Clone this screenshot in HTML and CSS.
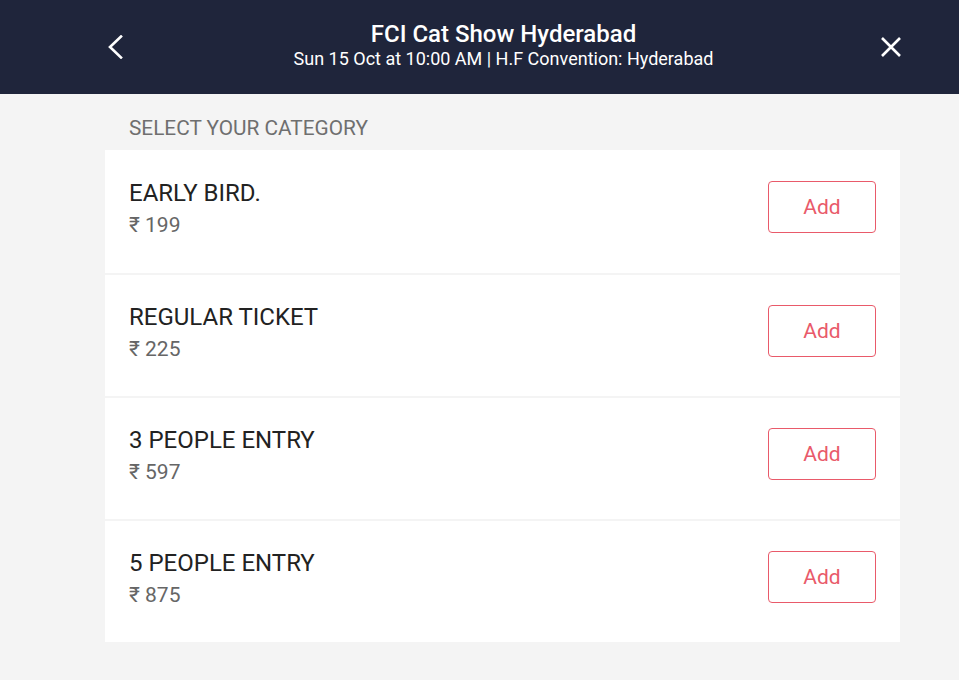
FILE: index.html
```html
<!DOCTYPE html>
<html>
<head>
<meta charset="utf-8">
<link rel="stylesheet" href="styles.css">
</head>
<body>
<header class="topbar">
  <button class="icon-btn" aria-label="Back">
    <svg width="24" height="24" viewBox="0 0 24 24"><path d="M17 1.5 L6 12 L17 22.5" fill="none" stroke="#fff" stroke-width="2.6" stroke-linecap="square"/></svg>
  </button>
  <div class="event">
    <div class="event-title">FCI Cat Show Hyderabad</div>
    <div class="event-sub">Sun 15 Oct at 10:00 AM | H.F Convention: Hyderabad</div>
  </div>
  <button class="icon-btn close" aria-label="Close">
    <svg width="22" height="22" viewBox="0 0 22 22"><path d="M2 2 L20 20 M20 2 L2 20" fill="none" stroke="#fff" stroke-width="2.6"/></svg>
  </button>
</header>
<main class="content">
  <div class="section-label">SELECT YOUR CATEGORY</div>
  <div class="card">
    <div class="row">
      <div class="info"><div class="name">EARLY BIRD.</div><div class="price">₹ 199</div></div>
      <button class="add">Add</button>
    </div>
    <div class="row">
      <div class="info"><div class="name">REGULAR TICKET</div><div class="price">₹ 225</div></div>
      <button class="add">Add</button>
    </div>
    <div class="row">
      <div class="info"><div class="name">3 PEOPLE ENTRY</div><div class="price">₹ 597</div></div>
      <button class="add">Add</button>
    </div>
    <div class="row">
      <div class="info"><div class="name">5 PEOPLE ENTRY</div><div class="price">₹ 875</div></div>
      <button class="add">Add</button>
    </div>
  </div>
</main>
</body>
</html>
```
FILE: styles.css
```css
* { box-sizing: border-box; }
html, body { margin: 0; padding: 0; }
body {
  background: #f4f4f4;
  font-family: Roboto, "Liberation Sans", sans-serif;
  width: 959px;
  height: 680px;
  overflow: hidden;
}
.topbar {
  height: 94px;
  background: #1f253b;
  display: flex;
  align-items: center;
  padding: 0 56px 0 104px;
}
.icon-btn {
  background: none;
  border: 0;
  padding: 0;
  width: 24px;
  height: 24px;
  display: flex;
  align-items: center;
  justify-content: center;
  cursor: pointer;
}
.event {
  flex: 1;
  text-align: center;
  color: #fff;
  padding-bottom: 4px;
}
.event-title {
  font-size: 24px;
  font-weight: 500;
  line-height: 28px;
}
.event-sub {
  font-size: 18px;
  line-height: 22px;
}
.content {
  padding: 0 59px 0 105px;
}
.section-label {
  color: #6f6f6f;
  font-size: 20.8px;
  line-height: 24px;
  padding: 22px 0 10px 24px;
}
.card {
  background: #fff;
}
.row {
  height: 123px;
  display: flex;
  align-items: center;
  justify-content: space-between;
  padding: 0 24px;
  border-top: 2px solid #f4f4f4;
}
.row:first-child { border-top: 0; }
.info { margin-top: -7px; }
.name {
  color: #222;
  font-size: 24px;
  line-height: 30px;
}
.price {
  color: #666;
  font-size: 21px;
  line-height: 28px;
  margin-top: 3px;
}
.add {
  width: 108px;
  height: 52px;
  background: #fff;
  border: 1px solid #e95a6a;
  border-radius: 4px;
  color: #e95a6a;
  font-family: Roboto, "Liberation Sans", sans-serif;
  font-size: 21px;
  cursor: pointer;
  margin-top: -10px;
}
```
